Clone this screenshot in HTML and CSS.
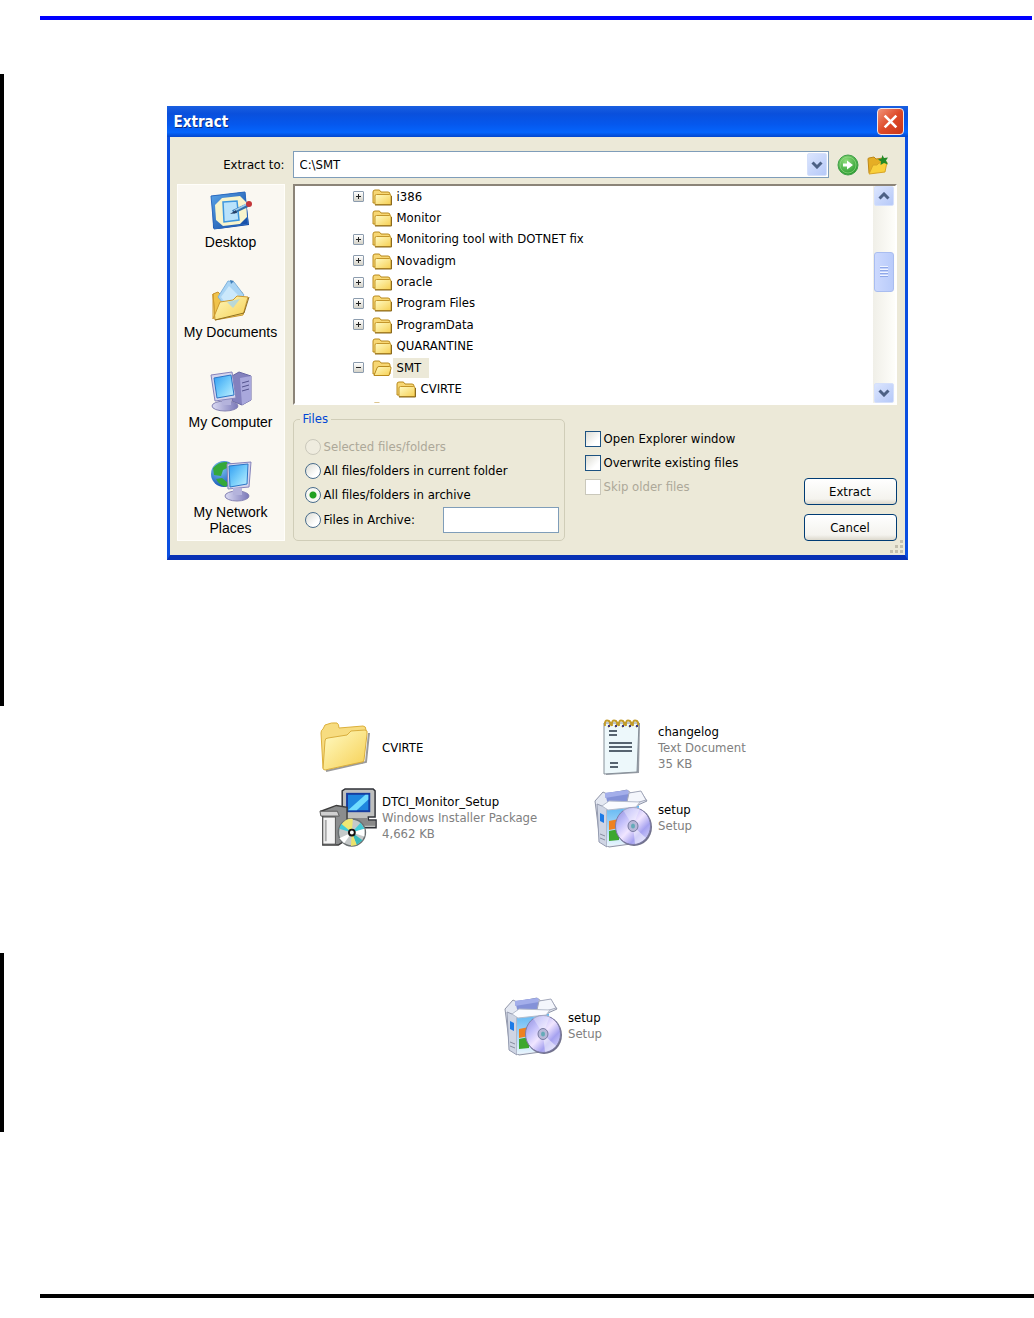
FILE: index.html
```html
<!DOCTYPE html>
<html lang="en">
<head>
<meta charset="utf-8">
<meta name="viewport" content="width=device-width, initial-scale=1">
<title>Extract</title>
<link rel="stylesheet" href="styles.css">
</head>
<body>
<svg class="defs" aria-hidden="true">
  <defs>
    <linearGradient id="gold" x1="0" y1="0" x2="1" y2="1"><stop offset="0" stop-color="#fffbc4"/><stop offset="1" stop-color="#f6cf52"/></linearGradient>
    <linearGradient id="screen" x1="0" y1="0" x2="1" y2="1"><stop offset="0" stop-color="#2f9df2"/><stop offset=".55" stop-color="#7cd0fb"/><stop offset="1" stop-color="#c6f1ff"/></linearGradient>
    <linearGradient id="lilac" x1="0" y1="0" x2="1" y2="0"><stop offset="0" stop-color="#dcdcf4"/><stop offset="1" stop-color="#7a78b8"/></linearGradient>
    <linearGradient id="navy" x1="0" y1="0" x2="1" y2="1"><stop offset="0" stop-color="#5aa4e8"/><stop offset="1" stop-color="#0f459f"/></linearGradient>
    <linearGradient id="boxface" x1="0" y1="0" x2="0" y2="1"><stop offset="0" stop-color="#5fb6f3"/><stop offset="1" stop-color="#e9f5fd"/></linearGradient>
    <linearGradient id="disc" x1="0" y1="0" x2="1" y2="1"><stop offset="0" stop-color="#8886d8"/><stop offset=".3" stop-color="#c3c0fa"/><stop offset=".5" stop-color="#f1e6ff"/><stop offset=".7" stop-color="#a6a2f0"/><stop offset="1" stop-color="#e4e4fc"/></linearGradient>
    <radialGradient id="globe" cx=".35" cy=".3" r=".8"><stop offset="0" stop-color="#7fc6f5"/><stop offset="1" stop-color="#0c4bb0"/></radialGradient>
    <radialGradient id="green" cx=".4" cy=".3" r=".7"><stop offset="0" stop-color="#8fdc7c"/><stop offset="1" stop-color="#2a9c2f"/></radialGradient>
  </defs>
  <symbol id="folder" viewBox="0 0 22 18">
    <path d="M2 15V4q0-2 2-2h4q1 0 2 2h7q2 0 2 2v9z" fill="#f7d774" stroke="#b98a1c"/>
    <path d="M4 16.500V8q0-1.500 1.500-1.500h13q1.500 0 1.500 1.500v8.500z" fill="url(#gold)" stroke="#c4962a"/>
    <path d="M4 17h16.500V8" fill="none" stroke="#8a6a1e"/>
  </symbol>
  <symbol id="folder-open" viewBox="0 0 22 18">
    <path d="M2 15V4q0-2 2-2h4q1 0 2 2h7q2 0 2 2v9z" fill="#f7d774" stroke="#b98a1c"/>
    <path d="M3 16.500L6 9q.5-1.500 2-1.500h10.500q2 0 1.500 2l-2 7z" fill="url(#gold)" stroke="#b98a1c"/>
  </symbol>
  <symbol id="setup" viewBox="0 0 60 60">
    <path d="M1 13l8-9 4 2 20-4 4 3 10-1 6 9-9 4 0 38-29 4-9-6z" fill="#e4e8f2" stroke="#8f95a8"/>
    <path d="M11 5l23-3 2 12-22 3z" fill="#8492d8"/><path d="M11 5l23-3 1 4-24 4z" fill="#a3aeea"/>
    <path d="M35 5l12-2 5 9-10 3-9-1z" fill="#f4f6fc" stroke="#a3a8ba"/>
    <path d="M3 16l10 4v39l-8-5z" fill="#cfd5e4" stroke="#949bb0"/><path d="M6 25l4 2v8l-4-2z" fill="#1d7ae6"/><path d="M6 46l5 2M6 50l5 2" stroke="#878da0"/>
    <path d="M13 20l32-2v36l-32 4z" fill="url(#boxface)"/><path d="M8 18l7-5 31 1-4 5-28 3z" fill="#fafbff" stroke="#b5bccc"/>
    <path d="M15 33l10-2v9l-10 2z" fill="#ee8120"/><path d="M15 43l10-2v11l-10 1z" fill="#3da72f"/>
    <ellipse cx="40" cy="39" rx="18" ry="19" fill="#71718c"/>
    <ellipse cx="39" cy="38" rx="17.500" ry="18.500" fill="url(#disc)" stroke="#7e7da6"/>
    <path d="M39 38L29 22q8-5 17-2z" fill="#fff" opacity=".35"/><path d="M39 38l13 12q-5 5-11 6z" fill="#fff" opacity=".5"/>
    <ellipse cx="39" cy="38" rx="5" ry="5.500" fill="#b8b8d8" stroke="#777aa0"/><ellipse cx="39" cy="38" rx="2" ry="2.500" fill="#64aab8"/>
  </symbol>
</svg>

<main>
  <hr class="rule rule-top">

  <section class="step changed step-extract">
    <form class="dialog" aria-labelledby="dialog-title">
      <header class="titlebar">
        <h1 id="dialog-title">Extract</h1>
        <button type="button" class="close" aria-label="Close"><svg viewBox="0 0 16 16"><path d="M2.500 2.500l11 11M13.500 2.500l-11 11" stroke="#fff" stroke-width="2.500"/></svg></button>
      </header>
      <div class="dialog-body">
        <label class="path-label" for="path">Extract to:</label>
        <div class="path-row">
          <div class="combo">
            <select id="path"><option>C:\SMT</option></select>
            <span class="combo-arrow arrow-box"><svg viewBox="0 0 12 8"><path d="M1.500 1.500L6 6l4.500-4.500" /></svg></span>
          </div>
          <button type="button" class="tool" aria-label="Go"><svg viewBox="0 0 22 22"><circle cx="11" cy="11" r="10" fill="url(#green)" stroke="#43a04a"/><circle cx="11" cy="11" r="8" fill="none" stroke="#9fe08d" opacity=".6"/><path d="M6 9.500h4V6.500l6 4.500-6 4.500v-3H6z" fill="#fff"/></svg></button>
          <button type="button" class="tool" aria-label="New folder"><svg viewBox="0 0 22 22"><path d="M2 19L1 5q0-1 1-1l5-1 2 2 7-1 1 11z" fill="#e5ae25" stroke="#bd8717"/><path d="M2 20L6 11l4 0 2-2 8-1-2 10z" fill="#f9d03c" stroke="#d8a426"/><path d="M15.500 1l1.500 3 4-.5-2 3 2 4-4-1.500-3.500 2 .5-3.500-3-2 3.500-1z" fill="#238a26"/></svg></button>
        </div>

        <nav class="places" aria-label="Places">
          <a href="#desktop"><svg viewBox="0 0 42 42"><path d="M2 6l33-4 4 33-31 4-5-1z" fill="#0d3f96"/><path d="M1 6l34-4 3 32-34 5z" fill="url(#navy)" stroke="#2c6bc0"/><path d="M12 8l18-2 6 6 1 15-7 7-17 2-7-6-1-15z" fill="#f8f4cc"/><path d="M13 12l14-1 2 19-15 2z" fill="#b9e2fb" stroke="#3e96de" stroke-width="1.500"/><path d="M23 22l15-7" stroke="#326fa9" stroke-width="4"/><path d="M24 21l13-7" stroke="#9ccdf0" stroke-width="1.500"/><path d="M20 24l6-4 1 3z" fill="#263f65"/><circle cx="39" cy="14" r="3" fill="#c3363a"/></svg><span>Desktop</span></a>
          <a href="#documents"><svg viewBox="0 0 42 42"><path d="M3 14l5-2 4 4 20-4v20L5 39z" fill="#f0c34b" stroke="#c8922a"/><path d="M18 1l6 1 10 13-14 17L8 17z" fill="#a9d4f4" stroke="#7fb2dc"/><path d="M19 6l10 10-9 13-9-12z" fill="#cbe8fb"/><path d="M20 0l4 1-3 3z" fill="#3f7fba"/><path d="M3 14v25l7-17 13-2 4-4 11 1-5 18-28 5z" fill="url(#gold)" stroke="#cd992f"/><path d="M17 22l6 6 7-9z" fill="#a9d4ea" opacity=".8"/><path d="M5 40l29-7 5-16" fill="none" stroke="#8f7022"/></svg><span>My Documents</span></a>
          <a href="#computer"><svg viewBox="0 0 42 42"><path d="M22 6l7-4 12 4v24l-9 5-10-4z" fill="#8381be" stroke="#6867a4"/><path d="M30 8l11-2v24l-9 5z" fill="#a9a8dc"/><path d="M32 13l7-2M32 17l7-2M32 21l7-2" stroke="#55548f"/><ellipse cx="15" cy="36" rx="13" ry="5" fill="url(#lilac)" stroke="#8583b3"/><path d="M12 26h9v9h-9z" fill="#b4b3dc"/><path d="M1 5l21-3 4 26-21 3z" fill="#d6d5ed" stroke="#8583bb"/><path d="M4 8l17-3 3 20-17 3z" fill="url(#screen)" stroke="#2c76c6"/></svg><span>My Computer</span></a>
          <a href="#network"><svg viewBox="0 0 42 42"><circle cx="14" cy="14" r="13" fill="url(#globe)"/><path d="M3 8Q9 1 17 2l2 5-6 3-2 6-7-1zM6 19l6-1 6 5-2 4q-7-2-10-8z" fill="#35a83a"/><path d="M17 4l24-2-2 25-21 2z" fill="#d6d5ed" stroke="#8583bb"/><path d="M19 6l19-2-1 20-17 3z" fill="url(#screen)" stroke="#2c76c6"/><ellipse cx="27" cy="36" rx="12" ry="5" fill="url(#lilac)" stroke="#8583b3"/><path d="M23 28h9v7h-9z" fill="#b4b3dc"/></svg><span>My Network<br>Places</span></a>
        </nav>

        <div class="pane">
          <div class="tree">
            <ul>
              <li><button type="button" class="toggle plus" aria-label="Expand i386"></button><svg><use href="#folder"/></svg><span>i386</span></li>
              <li><svg><use href="#folder"/></svg><span>Monitor</span></li>
              <li><button type="button" class="toggle plus" aria-label="Expand Monitoring tool"></button><svg><use href="#folder"/></svg><span>Monitoring tool with DOTNET fix</span></li>
              <li><button type="button" class="toggle plus" aria-label="Expand Novadigm"></button><svg><use href="#folder"/></svg><span>Novadigm</span></li>
              <li><button type="button" class="toggle plus" aria-label="Expand oracle"></button><svg><use href="#folder"/></svg><span>oracle</span></li>
              <li><button type="button" class="toggle plus" aria-label="Expand Program Files"></button><svg><use href="#folder"/></svg><span>Program Files</span></li>
              <li><button type="button" class="toggle plus" aria-label="Expand ProgramData"></button><svg><use href="#folder"/></svg><span>ProgramData</span></li>
              <li><svg><use href="#folder"/></svg><span>QUARANTINE</span></li>
              <li><button type="button" class="toggle" aria-label="Collapse SMT"></button><svg><use href="#folder-open"/></svg><span class="selected">SMT</span></li>
              <li class="child"><svg><use href="#folder"/></svg><span>CVIRTE</span></li>
              <li><svg><use href="#folder"/></svg></li>
            </ul>
            <div class="scrollbar">
              <button type="button" class="arrow-box" aria-label="Scroll up"><svg viewBox="0 0 12 8"><path d="M1.500 6.500L6 2l4.500 4.500"/></svg></button>
              <div class="thumb"></div>
              <button type="button" class="arrow-box" aria-label="Scroll down"><svg viewBox="0 0 12 8"><path d="M1.500 1.500L6 6l4.500-4.500"/></svg></button>
            </div>
          </div>

          <div class="options">
            <fieldset>
              <legend>Files</legend>
              <label class="choice off"><input type="radio" name="files" disabled>Selected files/folders</label>
              <label class="choice"><input type="radio" name="files">All files/folders in current folder</label>
              <label class="choice"><input type="radio" name="files" checked>All files/folders in archive</label>
              <div class="choice-row">
                <label class="choice"><input type="radio" name="files">Files in Archive:</label>
                <input type="text" class="pattern" aria-label="Files in Archive">
              </div>
            </fieldset>
            <div class="checks">
              <label class="choice"><input type="checkbox">Open Explorer window</label>
              <label class="choice"><input type="checkbox">Overwrite existing files</label>
              <label class="choice off"><input type="checkbox" disabled>Skip older files</label>
            </div>
            <div class="actions">
              <button type="button">Extract</button>
              <button type="button">Cancel</button>
            </div>
          </div>
        </div>
        <svg class="grip" viewBox="0 0 14 14"><path d="M10 0h3v3h-3zM5 5h3v3H5zM10 5h3v3h-3zM0 10h3v3H0zM5 10h3v3H5zM10 10h3v3h-3z" fill="#c4c0ae"/></svg>
      </div>
    </form>
  </section>

  <section class="step step-files">
    <ul class="files">
      <li>
        <svg viewBox="0 0 60 60"><path d="M5 50L3 15q0-3 2-4l2-4q7-3 12-2 2 1 2 5l24-2q3 0 3 4l-3 33z" fill="#f7dc80" stroke="#dcb03c"/><path d="M8 53l40-9 3-29" fill="none" stroke="#9b9b9b" stroke-width="2"/><path d="M5 51L7 23q0-3 3-3l19-3 4-4 14-1q3 0 2 4l-3 26q0 2-2 2L7 52z" fill="url(#gold)" stroke="#d9ae3d"/></svg>
        <p><b>CVIRTE</b></p>
      </li>
      <li>
        <svg viewBox="0 0 60 60"><path d="M11 5l35 0-1 50-33 2z" fill="#989da5"/><path d="M10 5l35 0-2 49-33 2z" fill="#edf8fb" stroke="#879099"/><path d="M15 13h8M15 17h8M15 25h23M15 29h23M15 33h23M16 45h8M16 49h8" stroke="#263343" stroke-width="1.500"/><g fill="none" stroke="#c29b28" stroke-width="2"><path d="M11 8q-1-7 4-5 3 3-1 6M18 8q-1-7 4-5 3 3-1 6M25 8q-1-7 4-5 3 3-1 6M32 8q-1-7 4-5 3 3-1 6M39 8q-1-7 4-5 3 3-1 6"/></g><path d="M14 8h2M21 8h2M28 8h2M35 8h2M42 8h2" stroke="#3e397c" stroke-width="2"/></svg>
        <p><b>changelog</b><br>Text Document<br>35 KB</p>
      </li>
      <li>
        <svg viewBox="0 0 60 62"><path d="M24 3l3-2h29l2 2v27h-7v3h8v8h-31l-4-5z" fill="#bfc0bf" stroke="#303238" stroke-width="1.500"/><path d="M28 5h25v20H28z" fill="#163c9f"/><path d="M30 7h21v16H30z" fill="#1f86df"/><path d="M30 23l18-16h3v5L39 23z" fill="#70dcff"/><path d="M26 31h24v3h8v5H26z" fill="#898989"/><path d="M2 24l16-6 11 2v33l-9 6H4V30z" fill="#8b8d8e" stroke="#3c3c3c" stroke-width="1.500"/><path d="M1 24h18l2 5H2z" fill="#d1d1d1" stroke="#5a5a5a"/><path d="M4 30h13v28H4z" fill="#f4f4f4" stroke="#555"/><path d="M7 33v22" stroke="#aaa" stroke-width="2"/><circle cx="34" cy="46" r="14" fill="#c5c9c9" stroke="#6a7072" stroke-width="1.500"/><path d="M34 46L23 38q5-7 12-6z" fill="#efe873"/><path d="M34 46L21 42l2-5zM34 46l9-10 4 6z" fill="#43cbd7"/><path d="M34 46l13-4v8z" fill="#fff"/><path d="M34 46l11 8-6 5z" fill="#35b9bd"/><path d="M34 46l5 13-6 1z" fill="#eae36c"/><path d="M34 46l-8 11-5-5z" fill="#fff"/><circle cx="34" cy="46" r="3" fill="#fff" stroke="#111" stroke-width="2"/></svg>
        <p><b>DTCI_Monitor_Setup</b><br>Windows Installer Package<br>4,662 KB</p>
      </li>
      <li>
        <svg><use href="#setup"/></svg>
        <p><b>setup</b><br>Setup</p>
      </li>
    </ul>
  </section>

  <section class="step changed step-run">
    <ul class="files single">
      <li>
        <svg><use href="#setup"/></svg>
        <p><b>setup</b><br>Setup</p>
      </li>
    </ul>
  </section>

  <hr class="rule rule-bottom">
</main>
</body>
</html>
```

FILE: styles.css
```css
* { box-sizing: border-box; }

body {
  margin: 0;
  background: #fff;
  color: #000;
  font: 13px/16px "DejaVu Sans Condensed", "DejaVu Sans", sans-serif;
}

button, input, select { font: inherit; color: inherit; margin: 0; padding: 0; }
svg { display: block; flex: none; }
ul { list-style: none; margin: 0; padding: 0; }
p { margin: 0; }
.defs { position: absolute; width: 0; height: 0; }

main { padding: 16px 0 19px; }

.rule { border: 0; margin: 0 0 0 40px; height: 4px; }
.rule-top { background: #00f; margin-right: 2px; }
.rule-bottom { background: #000; margin-top: 162px; }

.step { border-left: 4px solid transparent; padding-left: 36px; display: grid; justify-items: center; }
.changed { border-left-color: #000; }
.step-extract { margin-top: 54px; padding-top: 32px; padding-bottom: 146px; }
.step-files { padding-top: 12px; padding-bottom: 105px; }
.step-run { padding-top: 43px; padding-bottom: 76px; }

/* Dialog window */
.dialog { width: 100%; max-width: 741px; background: #ece9d8; border: 3px solid #0b4fe0; border-top: 0; border-bottom: 5px solid #0831b4; }
.titlebar {
  display: flex; align-items: center; justify-content: space-between;
  height: 31px; margin: 0 -3px; padding: 0 4px 0 7px;
  background: linear-gradient(#1a5fe0, #0a50dc 25%, #0558ee 60%, #0565fc 85%, #0346cc);
}
.titlebar h1 { margin: 0; color: #fff; font-size: 15px; line-height: 20px; text-shadow: 1px 1px #0a2a80; }
.close { display: grid; place-items: center; width: 27px; height: 27px; border: 1px solid #f2e6e6; border-radius: 4px; background: linear-gradient(135deg, #f0937a, #de4a28 50%, #c8371a); }
.close svg { width: 17px; height: 17px; }

.dialog-body {
  position: relative;
  display: grid; grid-template-columns: 108px 1fr; column-gap: 8px; row-gap: 6px;
  padding: 14px 8px 14px 7px;
}
.path-label { align-self: center; text-align: right; }
.path-row { display: flex; align-items: center; gap: 8px; padding-right: 8px; }
.combo { position: relative; flex: 1; height: 27px; }
.combo select { width: 100%; height: 100%; padding-left: 6px; border: 1px solid #7f9db9; border-radius: 0; background: #fff; appearance: none; }
.arrow-box { display: grid; place-items: center; width: 20px; height: 20px; border: 1px solid #d5e0fb; border-radius: 2px; background: linear-gradient(135deg, #dbe5fe, #b6c9f8); }
.arrow-box svg { width: 12px; height: 8px; fill: none; stroke: #4d6185; stroke-width: 3; }
.combo-arrow { position: absolute; top: 2px; right: 2px; height: 23px; pointer-events: none; }
.tool { width: 22px; height: 22px; border: 0; background: none; }
.tool svg { width: 22px; height: 22px; }

.places {
  display: flex; flex-direction: column; gap: 30px;
  padding: 5px 0 4px; background: #faf8f2; border: 1px solid #fffefa;
  font-family: "Liberation Sans", Arial, sans-serif; font-size: 14px;
}
.places a { display: grid; justify-items: center; gap: 2px; color: inherit; text-decoration: none; text-align: center; }
.places svg { width: 42px; height: 42px; }

.pane { display: flex; flex-direction: column; justify-content: space-between; }
.tree { display: flex; height: 221px; overflow: hidden; background: #fff; border: 2px solid #fff; border-top-color: #8b8478; border-left-color: #8b8478; }
.tree ul { flex: 1; display: grid; grid-auto-rows: 1fr; height: 235px; padding-left: 58px; }
.tree li { display: grid; grid-template-columns: 18px 22px auto; justify-content: start; align-items: center; }
.tree li svg { grid-column: 2; width: 22px; height: 18px; }
.tree li span { padding: 2px 4px; }
.tree .child { padding-left: 24px; }
.tree .selected { background: #ece9d8; padding-right: 8px; }
.toggle {
  width: 11px; height: 11px; border: 1px solid #8c9cae; border-radius: 1px;
  background: linear-gradient(#222, #222) center / 5px 1px no-repeat, linear-gradient(#fff, #d4d2c8);
}
.plus { background: linear-gradient(#222, #222) center / 5px 1px no-repeat, linear-gradient(#222, #222) center / 1px 5px no-repeat, linear-gradient(#fff, #d4d2c8); }

.scrollbar { display: flex; flex-direction: column; justify-content: space-between; align-items: center; width: 22px; background: linear-gradient(90deg, #f0efe8, #fefefa); }
.thumb {
  width: 20px; height: 40px; margin-bottom: 46px; border: 1px solid #a9bdf0; border-radius: 3px;
  background: repeating-linear-gradient(#f0f4ff 0 1px, #8fa8e8 1px 2px, #c2d1fc 2px 3px) center / 8px 12px no-repeat, linear-gradient(90deg, #ccd9fe, #b9cbfa);
}

.options { display: flex; }
fieldset { width: 272px; min-width: 0; margin: 0; padding: 8px 5px 7px 11px; border: 1px solid #d0cdb8; border-radius: 5px; }
legend { margin-left: -5px; padding: 0 3px; color: #0046d5; }
.choice { display: flex; align-items: center; gap: 3px; height: 24px; }
.choice-row { display: flex; align-items: center; justify-content: space-between; }
.off { color: #aca899; }
.choice input { appearance: none; flex: none; width: 16px; height: 16px; border: 1px solid #1d5281; background: linear-gradient(135deg, #dcdcd4, #fff 70%); }
.choice [type="radio"] { border-color: #4a6d8c; border-radius: 50%; }
.choice [type="radio"]:checked { background: radial-gradient(circle, #21a121 0 3px, #f8f8f4 4px); }
.choice input:disabled { border-color: #cac8bb; background: #fff; }
.choice [type="radio"]:disabled { background: #efecdf; }
.pattern { width: 116px; height: 26px; border: 1px solid #7f9db9; background: #fff; }
.checks { padding: 16px 0 0 20px; }
.actions { display: grid; align-content: end; gap: 9px; margin-left: auto; }
.actions button { width: 93px; height: 27px; border: 1px solid #003c74; border-radius: 4px; background: linear-gradient(#fff, #f4f3ee 80%, #dcd8cc); }
.grip { position: absolute; right: 1px; bottom: 1px; width: 14px; height: 14px; }

/* File tiles */
.files { display: grid; grid-template-columns: 276px 162px; gap: 10px 0; color: #808080; }
.files li { display: flex; align-items: center; gap: 4px; }
.files svg { width: 60px; height: 60px; }
.files b { font-weight: normal; color: #000; }
.single { grid-template-columns: auto; padding-left: 32px; }
```
